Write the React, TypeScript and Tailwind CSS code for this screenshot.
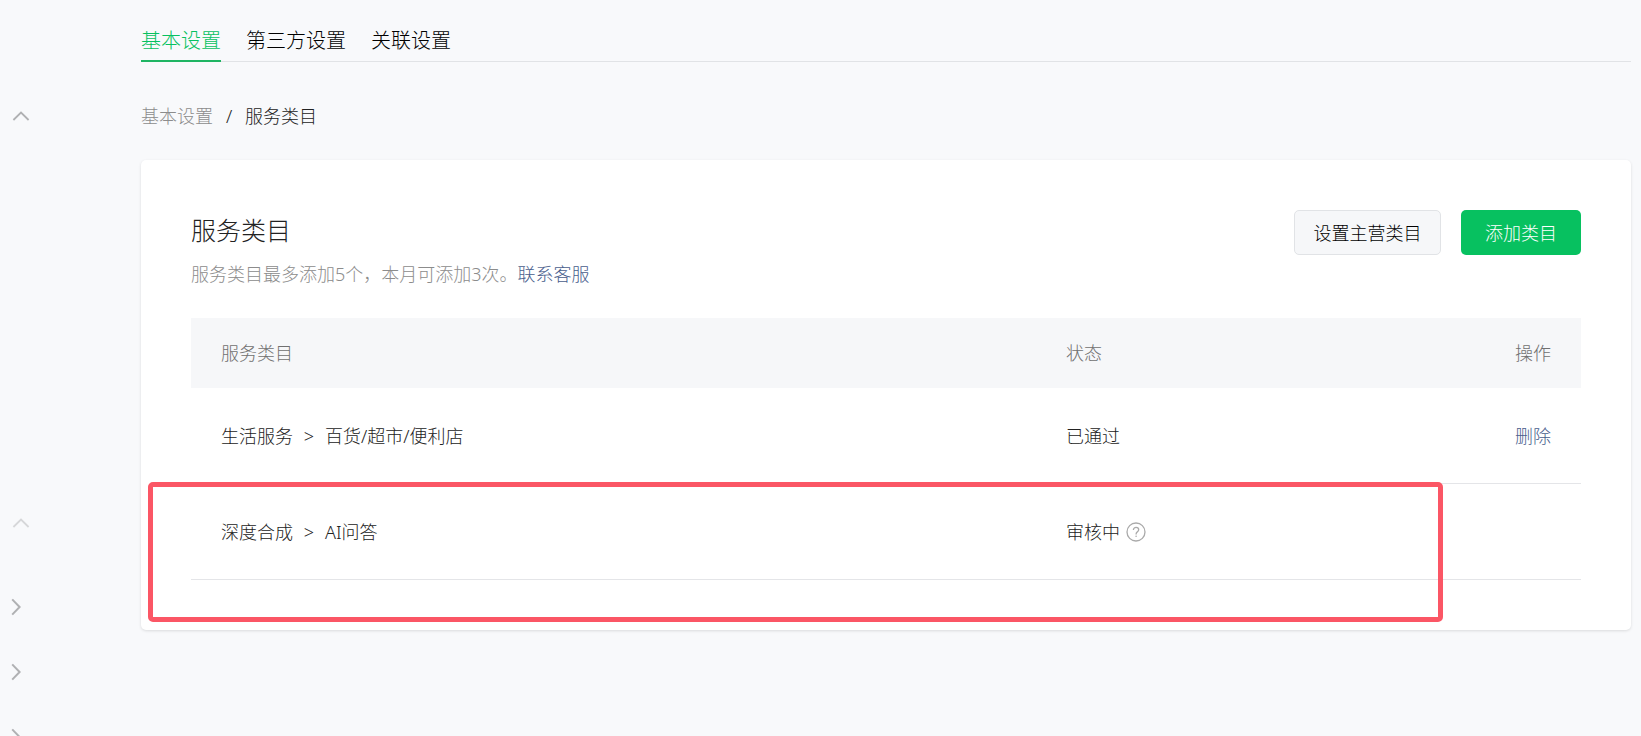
import type { ReactNode } from "react";

type Row = {
  path: [string, string];
  status: string;
  help?: boolean;
  removable?: boolean;
};

const tabs = [
  { label: "基本设置", active: true },
  { label: "第三方设置", active: false },
  { label: "关联设置", active: false },
];

const rows: Row[] = [
  { path: ["生活服务", "百货/超市/便利店"], status: "已通过", removable: true },
  { path: ["深度合成", "AI问答"], status: "审核中", help: true },
];

function ChevronUp() {
  return (
    <svg width="18" height="10" viewBox="0 0 18 10" fill="none" stroke="currentColor" strokeWidth="1.8">
      <path d="M1.4 9 9 1.6 16.6 9" />
    </svg>
  );
}

function ChevronRight() {
  return (
    <svg width="10" height="18" viewBox="0 0 10 18" fill="none" stroke="currentColor" strokeWidth="2">
      <path d="M1.2 1.4 8.6 9 1.2 16.6" />
    </svg>
  );
}

function HelpIcon() {
  return (
    <svg width="20" height="20" viewBox="0 0 20 20" fill="none" stroke="currentColor" strokeWidth="1.3">
      <circle cx="10" cy="10" r="9" />
      <path d="M7.4 8.1c0-1.6 1.1-2.7 2.7-2.7s2.6 1 2.6 2.4c0 1.9-2.6 2.2-2.6 4.2v.4" />
      <circle cx="10.1" cy="14.3" r="0.8" fill="currentColor" stroke="none" />
    </svg>
  );
}

function Toggle({ label, className, children }: { label: string; className: string; children: ReactNode }) {
  return (
    <button type="button" aria-label={label} className={`flex h-6 shrink-0 items-center justify-center ${className}`}>
      {children}
    </button>
  );
}

export default function App() {
  return (
    <div className="flex h-screen overflow-hidden bg-[#f8f9fb] font-['Noto_Sans','Noto_Sans_CJK_SC',sans-serif] text-[18px] leading-[28px] font-light text-[#222222]">
      <aside className="flex w-[141px] shrink-0 flex-col overflow-hidden pt-[104px] text-[#b0b1b3]">
        <Toggle label="收起" className="w-[42px]">
          <ChevronUp />
        </Toggle>
        <Toggle label="收起" className="mt-[383px] w-[42px] text-[#d6d7d9]">
          <ChevronUp />
        </Toggle>
        <Toggle label="展开" className="mt-[60px] w-8">
          <ChevronRight />
        </Toggle>
        <Toggle label="展开" className="mt-[41px] w-8">
          <ChevronRight />
        </Toggle>
        <Toggle label="展开" className="mt-[41px] w-8">
          <ChevronRight />
        </Toggle>
      </aside>

      <main className="min-w-0 flex-1 pr-[10px]">
        <nav className="flex h-[62px] items-end gap-[25px] border-b border-[#e1e3e6] text-[20px] text-black">
          {tabs.map((tab) => (
            <a
              key={tab.label}
              href="#"
              className={
                tab.active
                  ? "-mb-px border-b-2 border-[#1fb563] pb-[5px] text-[#07c160]"
                  : "-mb-px border-b-2 border-transparent pb-[5px]"
              }
            >
              {tab.label}
            </a>
          ))}
        </nav>

        <nav className="mt-[40px] flex">
          <a href="#" className="text-[#8c8c8c]">
            基本设置
          </a>
          <span className="w-8 text-center">/</span>
          <span>服务类目</span>
        </nav>

        <section className="relative mt-[30px] rounded-[5px] bg-white p-[50px] shadow-[0_1px_3px_rgba(0,0,0,0.12)]">
          <header className="flex items-start justify-between">
            <div>
              <h1 className="text-[25px] leading-[40px]">服务类目</h1>
              <p className="mt-[10px] text-[#8c8c8c]">
                服务类目最多添加5个，本月可添加3次。
                <a href="#" className="text-[#485d8c]">
                  联系客服
                </a>
              </p>
            </div>
            <div className="flex gap-5">
              <button
                type="button"
                className="h-[45px] w-[147px] rounded-[5px] border border-[#e1e3e6] bg-[#f6f7f9] text-black"
              >
                设置主营类目
              </button>
              <button type="button" className="h-[45px] w-[120px] rounded-[5px] bg-[#07c160] text-white">
                添加类目
              </button>
            </div>
          </header>

          <table className="mt-[30px] w-full table-fixed border-separate border-spacing-0 text-left">
            <thead className="bg-[#f6f7f9] text-[#707070]">
              <tr className="h-[70px]">
                <th className="w-[60.8%] px-[30px] font-light">服务类目</th>
                <th className="w-[24%] px-[30px] font-light">状态</th>
                <th className="px-[30px] text-right font-light">操作</th>
              </tr>
            </thead>
            <tbody>
              {rows.map((row) => (
                <tr key={row.path[0]} className="h-[96px] *:border-b *:border-[#e4e5e8]">
                  <td className="px-[30px]">
                    <div className="flex">
                      <span>{row.path[0]}</span>
                      <span className="w-8 text-center">&gt;</span>
                      <span>{row.path[1]}</span>
                    </div>
                  </td>
                  <td className="px-[30px]">
                    <div className="flex items-center gap-[6px]">
                      <span>{row.status}</span>
                      {row.help && (
                        <button type="button" aria-label="状态说明" className="text-[#aaaaaa]">
                          <HelpIcon />
                        </button>
                      )}
                    </div>
                  </td>
                  <td className="px-[30px] text-right">
                    {row.removable && (
                      <a href="#" className="text-[#485d8c]">
                        删除
                      </a>
                    )}
                  </td>
                </tr>
              ))}
            </tbody>
          </table>

          <div className="pointer-events-none absolute top-[322px] right-[188px] bottom-[8px] left-[7px] rounded-[5px] border-[5px] border-[#fb5665]" />
        </section>
      </main>
    </div>
  );
}
